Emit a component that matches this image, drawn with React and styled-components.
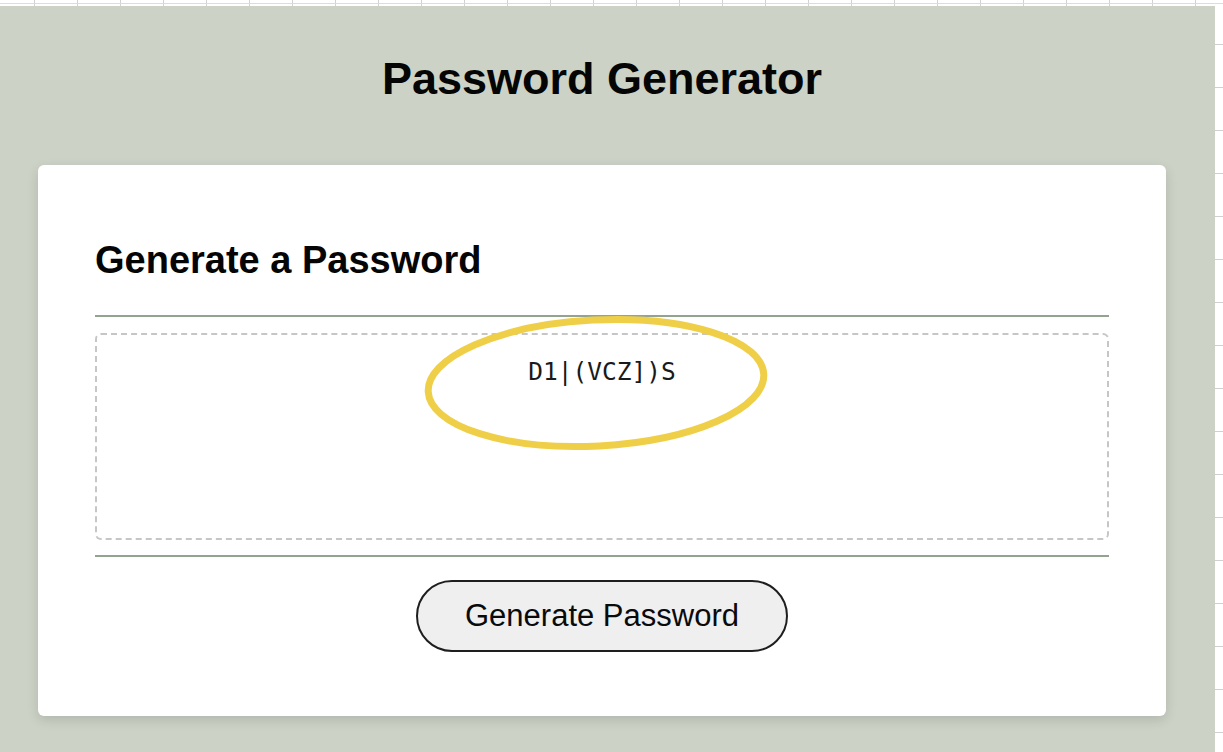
import React from "react";
import styled, { createGlobalStyle } from "styled-components";

const GlobalStyle = createGlobalStyle`
  html, body { margin: 0; padding: 0; background: #ffffff; }
  body { font-family: "Liberation Sans", Arial, sans-serif; }
  * { box-sizing: border-box; }
`;

const Page = styled.div`
  display: grid;
  grid-template-rows: 6px 1fr;
  min-height: 752px;
  width: 1223px;
  overflow: hidden;
`;

const TopStrip = styled.div`
  background-color: #ffffff;
  background-image:
    linear-gradient(#dcdcdc, #dcdcdc),
    linear-gradient(to right, #d2d2d2 1px, transparent 1px);
  background-size: 100% 1px, 43px 6px;
  background-position: 0 3px, 34px 0;
  background-repeat: no-repeat, repeat-x;
`;

const Row = styled.div`
  display: flex;
`;

const Main = styled.main`
  flex: 1;
  background: #ccd2c6;
  padding: 47px 49px 36px 38px;
  display: flex;
  flex-direction: column;
`;

const RightStrip = styled.div`
  width: 8px;
  background-color: #ffffff;
  background-image: linear-gradient(to bottom, #d0d0d0 1px, transparent 1px);
  background-size: 8px 43px;
  background-position: 0 38px;
`;

const Title = styled.h1`
  margin: 0 0 60px;
  text-align: center;
  font-size: 45px;
  line-height: 52px;
  font-weight: 700;
  color: #050505;
`;

const Card = styled.section`
  background: #ffffff;
  border-radius: 6px;
  box-shadow: 0 4px 12px rgba(0, 0, 0, 0.13);
  padding: 73px 57px 64px;
`;

const CardHeader = styled.div`
  padding-bottom: 33px;
  border-bottom: 2px solid #93a390;
`;

const Heading = styled.h2`
  margin: 0;
  font-size: 38px;
  line-height: 44px;
  font-weight: 700;
  color: #050505;
`;

const CardBody = styled.div`
  padding: 16px 0 15px;
`;

const PasswordBox = styled.div`
  position: relative;
  height: 207px;
  border: 2px dashed #c6c6c6;
  border-radius: 6px;
  padding-top: 22px;
  text-align: center;
  font-family: "DejaVu Sans Mono", "Liberation Mono", monospace;
  font-size: 24.5px;
  line-height: 30px;
  color: #1a1a1a;
`;

const Annotation = styled.svg`
  position: absolute;
  left: 319px;
  top: -27px;
  width: 360px;
  height: 150px;
  overflow: visible;
  pointer-events: none;
`;

const CardFooter = styled.div`
  border-top: 2px solid #93a390;
  padding-top: 23px;
  display: flex;
  justify-content: center;
`;

const GenerateButton = styled.button`
  height: 72px;
  padding: 0 47px;
  border: 2px solid #1e1e1e;
  border-radius: 36px;
  background: #efefef;
  font-family: "Liberation Sans", Arial, sans-serif;
  font-size: 31px;
  color: #0a0a0a;
  cursor: pointer;
`;

export default function App() {
  return (
    <>
      <GlobalStyle />
      <Page>
        <TopStrip />
        <Row>
          <Main>
            <Title>Password Generator</Title>
            <Card>
              <CardHeader>
                <Heading>Generate a Password</Heading>
              </CardHeader>
              <CardBody>
                <PasswordBox>
                  D1|(VCZ])S
                  <Annotation viewBox="0 0 360 150">
                    <ellipse
                      cx="180"
                      cy="75"
                      rx="168"
                      ry="63"
                      fill="none"
                      stroke="#f0cf48"
                      strokeWidth="7"
                      transform="rotate(-3 180 75)"
                    />
                  </Annotation>
                </PasswordBox>
              </CardBody>
              <CardFooter>
                <GenerateButton>Generate Password</GenerateButton>
              </CardFooter>
            </Card>
          </Main>
          <RightStrip />
        </Row>
      </Page>
    </>
  );
}
